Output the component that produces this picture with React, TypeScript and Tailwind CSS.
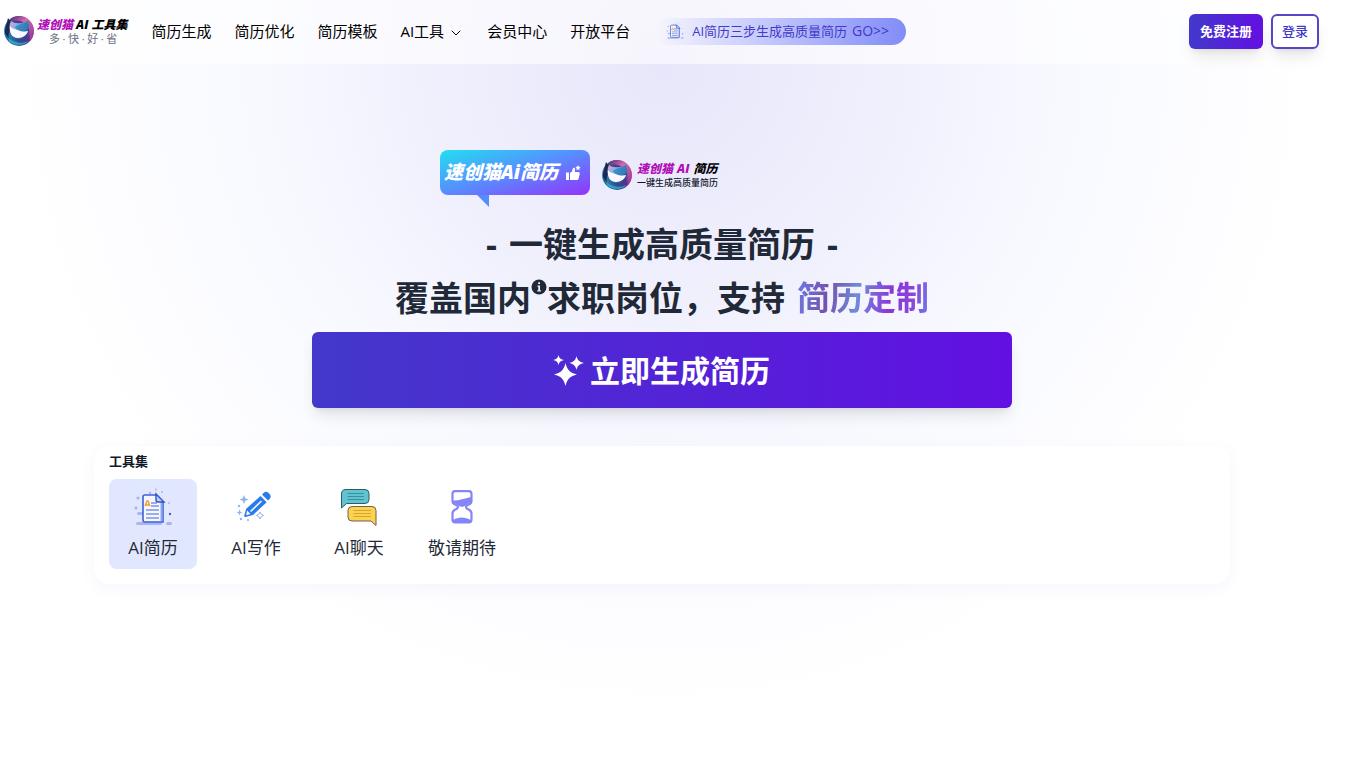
import { ChevronDown } from "lucide-react"

const navItems = ["简历生成", "简历优化", "简历模板", "AI工具", "会员中心", "开放平台"]

function CatMark({ id }: { id: string }) {
  return (
    <svg viewBox="0 0 32 32" className="size-8 shrink-0" aria-hidden="true">
      <defs>
        <linearGradient id={`${id}-ring`} x1="0" y1="0.7" x2="1" y2="0.25">
          <stop offset="0" stopColor="#2f9cc3" />
          <stop offset="0.35" stopColor="#27508c" />
          <stop offset="0.65" stopColor="#5a3090" />
          <stop offset="1" stopColor="#e45aa6" />
        </linearGradient>
        <linearGradient id={`${id}-top`} x1="0" y1="0" x2="1" y2="1">
          <stop offset="0" stopColor="#5a2f72" />
          <stop offset="0.4" stopColor="#d56aae" />
          <stop offset="1" stopColor="#8a3494" />
        </linearGradient>
        <linearGradient id={`${id}-head`} x1="0" y1="0" x2="1" y2="0.5">
          <stop offset="0" stopColor="#e7a5cf" />
          <stop offset="0.4" stopColor="#7db2e6" />
          <stop offset="1" stopColor="#1f4a8c" />
        </linearGradient>
      </defs>
      <circle cx="16" cy="16" r="15" fill={`url(#${id}-ring)`} />
      <path d="M9 3C16-1 25 2 29 9c3 6 2 12-2 17 0-8 0-14-6-18C16 5 12 5 8 7z" fill={`url(#${id}-top)`} />
      <path d="M5 3 3 11c-2 5-1 11 3 15-1-6 0-12 4-16z" fill="#1c2850" />
      <path d="M2 18c4 9 14 12 24 8-7 7-21 5-24-8z" fill="#3fb2d2" opacity="0.7" />
      <path d="M8 6c4 3 10 3 17 0 2 8 1 14-4 17-5 2-11 0-13-5-2-4-2-8 0-12z" fill={`url(#${id}-head)`} />
      <path d="M7 11c-1 7 2 12 8 12 5 0 9-3 10-7-4 1-7 0-10-1s-6-1-8-4z" fill="#fbf9ff" />
      <path d="M12 12c2-2 4-2 6-3 3 0 5-1 7-3l1 7c-2 3-6 4-9 3-2-1-4-2-5-4z" fill="#2f86bf" opacity="0.8" />
    </svg>
  )
}

function ResumeIcon({ className }: { className: string }) {
  return (
    <svg viewBox="0 0 40 40" className={className} fill="none" aria-hidden="true">
      <g fill="#a9b4f0">
        <rect x="3" y="34" width="26" height="3" rx="1.5" />
        <rect x="33" y="34" width="6" height="3" rx="1.5" />
        <rect x="4" y="24" width="7" height="3" rx="1.5" />
        <circle cx="5" cy="10" r="1.6" />
        <circle cx="3" cy="20" r="1.6" />
        <circle cx="17" cy="5" r="1.2" />
        <circle cx="23" cy="1.5" r="1" />
        <circle cx="29" cy="4" r="1" />
        <circle cx="36" cy="15" r="1" />
      </g>
      <circle cx="37" cy="26" r="1.2" fill="#3f62d7" />
      <path d="M12 7h11l7 7v20H12a2 2 0 0 1-2-2V9a2 2 0 0 1 2-2z" fill="#f4f7ff" stroke="#3f62d7" strokeWidth="1.6" />
      <path d="M28.500 14v19" stroke="#8aa6f3" strokeWidth="2" />
      <path d="M23 6v6q0 2 2 2h6z" fill="#bcd0ff" stroke="#3353bd" strokeWidth="1.4" />
      <path d="m12 18 2-5h1l2 5M13 17h4" stroke="#f59e32" strokeWidth="1.4" />
      <path d="M18 15h6M18 18h8M13 22h13M13 26h13M13 30h13" stroke="#3f62d7" strokeWidth="1.2" />
    </svg>
  )
}

function PencilIcon() {
  return (
    <svg viewBox="0 0 40 40" className="size-10" aria-hidden="true">
      <path
        d="m26 6.500 1.500-1.500c1.800-1.700 3.700-1.500 5.600.4s2.200 3.900.5 5.600L32 12.500zM24.500 8l6.200 6.200L17 27l-7.500 2c-1 .2-1.500-.3-1.300-1.300l2-7z"
        fill="#2b7bea"
      />
      <path d="M14.500 23.500 25.500 13" stroke="#f4f8ff" strokeWidth="1.600" fill="none" />
      <path d="m11 22.500 3.500 3.500-4.200 1.200z" fill="#fff" />
      <g fill="#8eb5f2">
        <path d="m8 7 1.300 3.200L12.500 11.500l-3.200 1.300L8 16l-1.300-3.200L3.500 11.500l3.200-1.300zM3.500 21.500l.9 2.200L6.500 24.500l-2.100.8-.9 2.200-.9-2.200-2.100-.8 2.100-.8z" />
        <circle cx="3" cy="18" r="1.200" />
        <circle cx="5" cy="31" r="1.200" />
        <circle cx="12" cy="32" r="1.100" />
      </g>
      <path d="m24 24 1.200 2.300L27.500 27.500l-2.300 1.200L24 31l-1.200-2.300-2.300-1.200 2.300-1.200z" fill="none" stroke="#8eb5f2" />
    </svg>
  )
}

function ChatIcon() {
  return (
    <svg viewBox="0 0 40 40" className="size-10" fill="none" aria-hidden="true">
      <path d="M7 1.500h19q4 0 4 4v6q0 4-4 4H7.500L2.500 20V6q0-4.500 4.500-4.500z" fill="#62c3d0" stroke="#2b5c6b" />
      <path d="M8.500 5.500H25M8.500 8.500H25M8.500 11.500H25" stroke="#2e8292" strokeWidth="0.8" />
      <path d="M13 18.500h20q4 0 4 4v15l-5-4.500H13q-4 0-4-4v-6.500q0-4 4-4z" fill="#ffd24d" stroke="#6d6155" />
      <path d="M14.500 22.500H32M14.500 25.500H32M14.500 28.500H32" stroke="#c39a35" strokeWidth="0.8" />
    </svg>
  )
}

function HourglassIcon() {
  return (
    <svg viewBox="0 0 40 40" className="size-10" aria-hidden="true">
      <path d="M10.500 12.500c6 .5 11-2 18.500-3.500v5l-6 4-3 1-3-1-6.500-4zM11 32c5-3.500 12-3.500 18 0v2H11z" fill="#8585f7" />
      <path
        d="M13 3.200h14q2.500 0 2.500 2.800v7q0 2.500-2.500 3.500c-4 1.500-4 3.500 0 5.300q2.500 1.200 2.500 3.700v6q0 2.800-2.500 2.800H13q-2.500 0-2.500-2.800v-6q0-2.500 2.500-3.700c4-1.800 4-3.800 0-5.300q-2.500-1-2.500-3.500V6q0-2.800 2.500-2.800z"
        fill="none"
        stroke="#8585f7"
        strokeWidth="2.200"
      />
    </svg>
  )
}

function ThumbIcon() {
  return (
    <svg viewBox="0 0 16 16" className="size-4" fill="#fff" aria-hidden="true">
      <path d="M1 7.500h3V15H1zM5 8l2-1.500L8 3c1.500-.5 2.500.5 2 2l-.3 2H13c1.500 0 2 .8 1.700 2l-1.200 5c-.2.700-.7 1-1.500 1H5z" />
      <path d="m13 0 .8 1.700 1.900.3-1.400 1.300.3 1.900-1.600-.9-1.600.9.300-1.900L10.300 2l1.900-.3z" />
    </svg>
  )
}

function SparkleIcon() {
  return (
    <svg viewBox="0 0 32 32" className="size-8" fill="#fff" aria-hidden="true">
      <path d="M13.500 8c1.700 7 4.500 10 11.500 11.500-7 1.500-9.800 4.500-11.500 11.500C11.800 24 9 21 2 19.500 9 18 11.800 15 13.500 8z" />
      <path d="M24.500 1c.9 4 2.500 5.800 7.500 7-5 1.200-6.600 3-7.500 7-.9-4-2.500-5.800-7-7 4.500-1.200 6.100-3 7-7zM6.500 0C7.200 3 8.500 4.300 12 5c-3.500.7-4.800 2-5.500 5C5.800 7 4.500 5.700 1 5c3.500-.7 4.800-2 5.500-5z" />
    </svg>
  )
}

function InfoIcon() {
  return (
    <svg viewBox="0 0 16 16" className="size-4" aria-hidden="true">
      <circle cx="8" cy="8" r="7.500" fill="#1f2937" />
      <path d="M7.200 3.200h1.800v1.800H7.200zM6.500 6.500H9v4.700h.9v1.300H6.300v-1.300h1V7.800h-.8z" fill="#f1f0fd" />
    </svg>
  )
}

const tools = [
  { label: "AI简历", icon: <ResumeIcon className="size-10" />, active: true },
  { label: "AI写作", icon: <PencilIcon />, active: false },
  { label: "AI聊天", icon: <ChatIcon />, active: false },
  { label: "敬请期待", icon: <HourglassIcon />, active: false },
]

function Header() {
  return (
    <header className="flex h-16 items-center justify-between bg-white/60 pr-[39px] pb-[2px] pl-[3px]">
      <div className="flex items-center">
        <a href="#" className="mr-6 flex items-center gap-[2px] whitespace-nowrap">
          <CatMark id="nav" />
          <span className="flex flex-col pt-[2px]">
            <span className="flex gap-[3px] text-[12px] leading-[14px] font-black text-black italic">
              <span className="text-[#b010b8]">速创猫</span>
              <span>AI</span>
              <span>工具集</span>
            </span>
            <span className="flex justify-between pr-[10px] pl-3 text-[11px] leading-[14px] text-gray-500">
              <span>多</span>
              <span>·</span>
              <span>快</span>
              <span>·</span>
              <span>好</span>
              <span>·</span>
              <span>省</span>
            </span>
          </span>
        </a>
        <nav className="flex items-center gap-[23px] text-[15px] leading-5 whitespace-nowrap text-black">
          {navItems.map((item) => (
            <a key={item} href="#" className="flex items-center gap-1">
              {item}
              {item === "AI工具" && <ChevronDown className="mt-1 size-4" strokeWidth={1.5} />}
            </a>
          ))}
        </nav>
        <a
          href="#"
          className="ml-[26px] flex h-[27px] items-center rounded-full bg-linear-to-r/srgb from-[#818cf8]/0 to-[#818cf8] pr-[17px] pl-[10px] text-[13px] whitespace-nowrap text-[#4338ca]"
        >
          <ResumeIcon className="mr-2 size-[18px]" />
          <span className="flex items-baseline gap-[5px]">
            AI简历三步生成高质量简历
            <span className="text-[14px]">GO&gt;&gt;</span>
          </span>
        </a>
      </div>
      <div className="flex gap-2 text-[13px] leading-5 font-bold whitespace-nowrap">
        <button
          type="button"
          className="h-[35px] rounded-md bg-linear-to-r/srgb from-[#4338ca] to-[#6210e2] px-[11px] text-white shadow-lg"
        >
          免费注册
        </button>
        <button
          type="button"
          className="h-[35px] rounded-md border-2 border-[#5646c4] bg-white px-[9px] font-medium text-[#4338ca] shadow-lg"
        >
          登录
        </button>
      </div>
    </header>
  )
}

function Hero() {
  return (
    <section className="flex flex-col items-center pt-[86px]">
      <div className="flex w-[444px] items-start gap-[11px]">
        <div className="relative flex h-[45px] w-[150px] items-center gap-[7px] rounded-lg bg-linear-to-br/srgb from-[#22dff0] via-[#598bff] to-[#9333fa] pl-1 text-[19px] font-black whitespace-nowrap text-white italic">
          速创猫Ai简历
          <ThumbIcon />
          <svg viewBox="0 0 13 12" className="absolute top-full left-[37px] h-3 w-[13px]" aria-hidden="true">
            <path d="M0 0h12v12z" fill="#548ff7" />
          </svg>
        </div>
        <div className="mt-[9px] flex items-center gap-1 whitespace-nowrap">
          <CatMark id="hero" />
          <div>
            <p className="flex gap-1 text-[12px] leading-[14px] font-black text-black italic">
              <span className="text-[#b010b8]">速创猫</span>
              <span className="text-[#b010b8]">AI</span>
              <span>简历</span>
            </p>
            <p className="text-[9px] leading-[13px] font-medium text-gray-900">一键生成高质量简历</p>
          </div>
        </div>
      </div>
      <h1 className="mt-[22px] text-center text-[34px] leading-[54px] font-bold text-[#1f2937]">
        <span className="flex justify-center gap-3">
          <span>-</span>
          <span>一键生成高质量简历</span>
          <span>-</span>
        </span>
        <span className="flex justify-center whitespace-nowrap">
          覆盖国内
          <span className="pt-2">
            <InfoIcon />
          </span>
          求职岗位，支持
          <span className="ml-3 bg-[linear-gradient(100deg,#6b7bea_0%,#7552ab_24%,#6f8bd8_46%,#8b35dc_70%,#8b45d8_85%,#6b7bf0_100%)] bg-clip-text text-[33px] text-transparent">
            简历定制
          </span>
        </span>
      </h1>
      <button
        type="button"
        className="mt-[7px] flex h-[76px] w-full max-w-[700px] items-center justify-center gap-[6px] rounded-md bg-linear-to-r/srgb from-[#4338ca] to-[#6210e2] pt-[2px] pr-[2px] text-[30px] leading-10 font-bold text-white shadow-lg"
      >
        <SparkleIcon />
        立即生成简历
      </button>
    </section>
  )
}

export default function App() {
  return (
    <div className="min-h-screen bg-white bg-[radial-gradient(circle_650px_at_662px_64px,#e8e6fa_0%,#f0f0fd_36%,#f8f9ff_62%,#ffffff_100%)] font-['Open_Sans','Noto_Sans_CJK_SC',sans-serif] text-[#1f2937]">
      <Header />
      <main className="pr-[34px]">
        <Hero />
        <section className="mx-[94px] mt-[38px] rounded-2xl bg-white px-[15px] pt-[5px] pb-[15px] shadow-[0_4px_16px_rgba(99,102,241,0.06)]">
          <h2 className="text-[13px] leading-5 font-bold text-gray-900">工具集</h2>
          <div className="mt-2 flex gap-[15px]">
            {tools.map((tool) => (
              <button
                key={tool.label}
                type="button"
                className={
                  tool.active
                    ? "flex h-[90px] w-[88px] flex-col items-center rounded-lg bg-indigo-100 pt-[9px]"
                    : "flex h-[90px] w-[88px] flex-col items-center rounded-lg pt-[9px]"
                }
              >
                {tool.icon}
                <span className="mt-2 text-[17px] leading-6 whitespace-nowrap">{tool.label}</span>
              </button>
            ))}
          </div>
        </section>
      </main>
    </div>
  )
}
